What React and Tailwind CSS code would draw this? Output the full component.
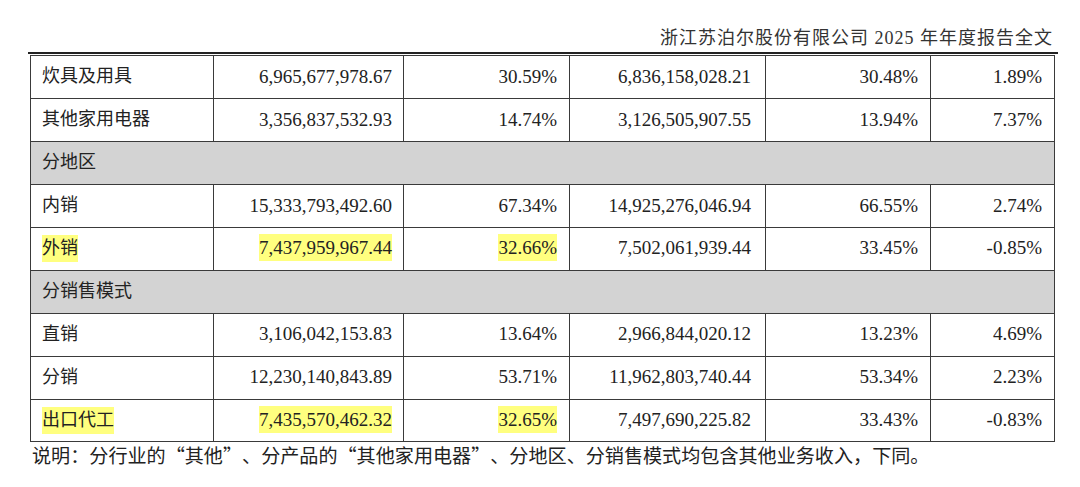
const rows = [
  { label: "炊具及用具", values: ["6,965,677,978.67", "30.59%", "6,836,158,028.21", "30.48%", "1.89%"] },
  { label: "其他家用电器", values: ["3,356,837,532.93", "14.74%", "3,126,505,907.55", "13.94%", "7.37%"] },
  { section: "分地区" },
  { label: "内销", values: ["15,333,793,492.60", "67.34%", "14,925,276,046.94", "66.55%", "2.74%"] },
  { label: "外销", highlight: true, values: ["7,437,959,967.44", "32.66%", "7,502,061,939.44", "33.45%", "-0.85%"] },
  { section: "分销售模式" },
  { label: "直销", values: ["3,106,042,153.83", "13.64%", "2,966,844,020.12", "13.23%", "4.69%"] },
  { label: "分销", values: ["12,230,140,843.89", "53.71%", "11,962,803,740.44", "53.34%", "2.23%"] },
  { label: "出口代工", highlight: true, values: ["7,435,570,462.32", "32.65%", "7,497,690,225.82", "33.43%", "-0.83%"] },
];

// padding on the right of each number column
const numPad = ["pr-[11px]", "pr-[12px]", "pr-[14px]", "pr-[12px]", "pr-[12px]"];

const Mark = ({ on, children }) =>
  on ? <span className="bg-[#ffff7f] inline-block leading-[27px]">{children}</span> : children;

export default function App() {
  return (
    <div className="w-[1080px] h-[487px] bg-white text-[#222] font-['Liberation_Serif','Noto_Sans_CJK_SC',serif] overflow-hidden">
      {/* page header */}
      <div className="h-[52px] pt-[26px] pr-[27px] text-right text-[18px] leading-[24px] tracking-[1px] text-[#333]">
        浙江苏泊尔股份有限公司 2025 年年度报告全文
      </div>
      <div className="ml-[28px] w-[1030px] border-t-2 border-[#222] h-[3px]" />

      {/* revenue table */}
      <table className="ml-[30px] table-fixed border-collapse">
        <colgroup>
          <col className="w-[183px]" />
          <col className="w-[190px]" />
          <col className="w-[166px]" />
          <col className="w-[196px]" />
          <col className="w-[165px]" />
          <col className="w-[124px]" />
        </colgroup>
        <tbody>
          {rows.map((row, i) =>
            row.section ? (
              <tr key={i} className="h-[42.95px]">
                <td colSpan={6} className="border border-[#3a3a3a] bg-[#d3d3d3] pl-[11px] text-[18px]">
                  {row.section}
                </td>
              </tr>
            ) : (
              <tr key={i} className="h-[42.95px]">
                <td className="border border-[#3a3a3a] pl-[11px] text-[18px]">
                  <Mark on={row.highlight}>{row.label}</Mark>
                </td>
                {row.values.map((v, j) => (
                  <td key={j} className={`border border-[#3a3a3a] text-right text-[19px] ${numPad[j]}`}>
                    <Mark on={row.highlight && j < 2}>{v}</Mark>
                  </td>
                ))}
              </tr>
            )
          )}
        </tbody>
      </table>

      {/* footnote */}
      <p className="pl-[32px] text-[19.1px] leading-[26px] whitespace-nowrap font-['Noto_Sans_CJK_SC',sans-serif] [text-spacing-trim:space-all]">
        说明：分行业的“其他”、分产品的“其他家用电器”、分地区、分销售模式均包含其他业务收入，下同。
      </p>
    </div>
  );
}
